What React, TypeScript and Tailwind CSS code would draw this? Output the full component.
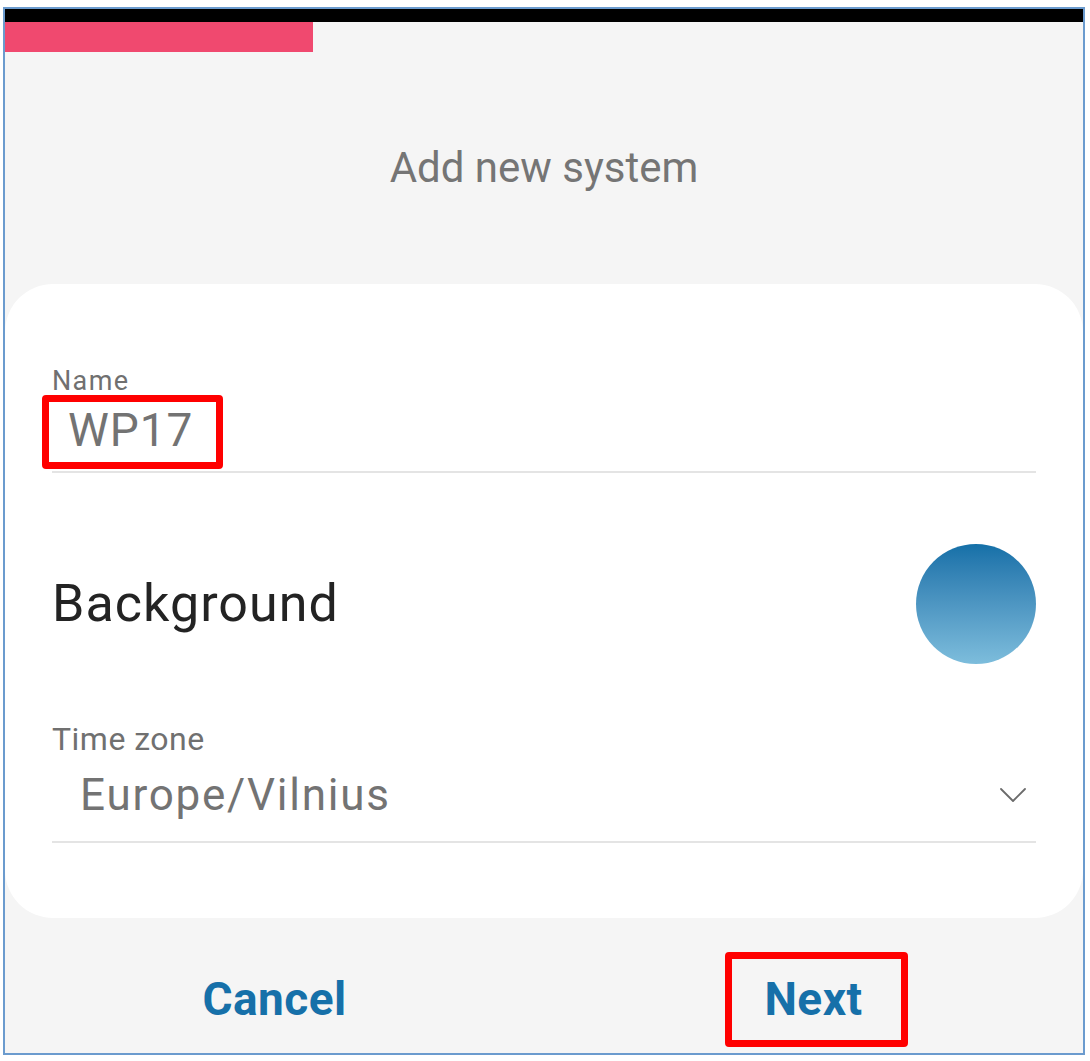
const font = { fontFamily: "Roboto, 'Noto Sans', sans-serif" };

function NameField() {
  return (
    <div>
      <div className="text-[27px] leading-none tracking-[0.05em] text-[#707070]">Name</div>
      <div className="mt-[12px] pl-[16px]">
        <span className="relative inline-block text-[46px] leading-none tracking-[0.02em] text-[#737373]">
          WP17
          <span className="absolute -left-[26px] -right-[30px] -top-[12px] -bottom-[16px] rounded-[4px] border-[7px] border-[#ff0000]" />
        </span>
      </div>
      <div className="mt-[18px] h-[2px] bg-[#e4e4e4]" />
    </div>
  );
}

function TimeZoneField() {
  return (
    <div>
      <div className="text-[32px] leading-none tracking-[0.015em] text-[#707070]">Time zone</div>
      <div className="mt-[18px] flex items-center justify-between pl-[28px] pr-[10px]">
        <span className="text-[44px] leading-none tracking-[0.04em] text-[#737373]">Europe/Vilnius</span>
        <svg width="26" height="14" viewBox="0 0 26 14" fill="none" className="text-[#6b6b6b]">
          <path d="M1 1 L13 13 L25 1" stroke="currentColor" strokeWidth="1.8" strokeLinecap="round" strokeLinejoin="round" />
        </svg>
      </div>
      <div className="mt-[24px] h-[2px] bg-[#e4e4e4]" />
    </div>
  );
}

function App() {
  return (
    <div className="min-h-[1061px] bg-white pt-[7px]" style={font}>
      <div className="ml-[3px] w-[1082px] h-[1048px] flex flex-col border-2 border-[#6b9bce] bg-[#f5f5f5]">
        <div className="h-[13px] bg-black" />
        <div className="h-[30px] w-[308px] bg-[#f0496f]" />

        <div className="h-[232px] flex items-center justify-center">
          <h1 className="text-[42px] leading-none text-[#757575]">Add new system</h1>
        </div>

        <div className="h-[634px] rounded-[48px] bg-white px-[47px] pt-[84px]">
          <NameField />

          <div className="mt-[71px] flex h-[120px] items-center justify-between">
            <span className="text-[52px] leading-none tracking-[0.02em] text-[#232323]">Background</span>
            <div className="h-[120px] w-[120px] rounded-full bg-gradient-to-b from-[#1470a8] to-[#7dbddc]" />
          </div>

          <div className="mt-[59px]">
            <TimeZoneField />
          </div>
        </div>

        <div className="grid grid-cols-2 pt-[58px]">
          <div className="flex justify-center">
            <button className="text-[46px] font-bold leading-none tracking-[0.01em] text-[#1670a9]">Cancel</button>
          </div>
          <div className="flex justify-center">
            <span className="relative inline-block">
              <button className="text-[46px] font-bold leading-none tracking-[0.01em] text-[#1670a9]">Next</button>
              <span className="absolute -left-[39px] -right-[45px] -top-[24px] -bottom-[25px] rounded-[4px] border-[7px] border-[#ff0000]" />
            </span>
          </div>
        </div>
      </div>
    </div>
  );
}

export default App;
